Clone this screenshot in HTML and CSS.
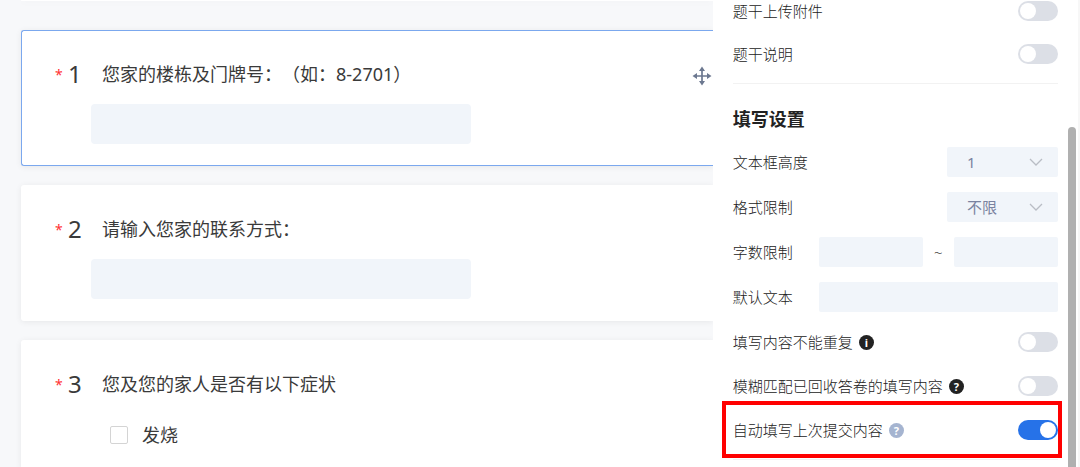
FILE: index.html
```html
<!DOCTYPE html>
<html lang="zh-CN">
<head>
<meta charset="utf-8">
<title>问卷编辑</title>
<link rel="stylesheet" href="styles.css">
</head>
<body>
<div class="editor">
  <main class="questions">
    <div class="card card-previous"></div>

    <section class="card card-active">
      <div class="question-head">
        <span class="required">*</span>
        <span class="number">1</span>
        <label class="title" for="answer-1">您家的楼栋及门牌号：（如：8-2701）</label>
        <button class="move" type="button" aria-label="移动">
          <svg viewBox="0 0 20 20" width="20" height="20" aria-hidden="true">
            <path d="M10 3v14M3 10h14" stroke="currentColor" stroke-width="1.700"/>
            <path d="M10 0.500l3 4.500h-6zM10 19.500l3-4.500h-6zM0.500 10l4.500-3v6zM19.500 10l-4.500-3v6z" fill="currentColor"/>
          </svg>
        </button>
      </div>
      <input class="answer" id="answer-1" type="text">
    </section>

    <section class="card">
      <div class="question-head">
        <span class="required">*</span>
        <span class="number">2</span>
        <label class="title" for="answer-2">请输入您家的联系方式：</label>
      </div>
      <input class="answer" id="answer-2" type="text">
    </section>

    <section class="card">
      <div class="question-head">
        <span class="required">*</span>
        <span class="number">3</span>
        <span class="title">您及您的家人是否有以下症状</span>
      </div>
      <label class="option"><input class="tick" type="checkbox">发烧</label>
    </section>
  </main>

  <aside class="settings">
    <div class="group switches">
      <div class="row"><label for="s-attach">题干上传附件</label><input class="switch" id="s-attach" type="checkbox" role="switch"></div>
      <div class="row"><label for="s-desc">题干说明</label><input class="switch" id="s-desc" type="checkbox" role="switch"></div>
    </div>

    <h2 class="heading">填写设置</h2>

    <div class="group fields">
      <div class="row">
        <label for="f-height">文本框高度</label>
        <div class="picker">
          <select class="field" id="f-height"><option>1</option></select>
          <svg class="chevron" viewBox="0 0 14 8" width="14" height="8" aria-hidden="true"><path d="M1 1l6 6 6-6" fill="none" stroke="currentColor" stroke-width="1.3"/></svg>
        </div>
      </div>
      <div class="row">
        <label for="f-format">格式限制</label>
        <div class="picker">
          <select class="field" id="f-format"><option>不限</option></select>
          <svg class="chevron" viewBox="0 0 14 8" width="14" height="8" aria-hidden="true"><path d="M1 1l6 6 6-6" fill="none" stroke="currentColor" stroke-width="1.3"/></svg>
        </div>
      </div>
      <div class="row">
        <label class="fixed-label" for="f-min">字数限制</label>
        <input class="field grow" id="f-min" type="text">
        <span class="tilde">~</span>
        <input class="field grow" type="text" aria-label="最多字数">
      </div>
      <div class="row">
        <label class="fixed-label" for="f-default">默认文本</label>
        <input class="field grow" id="f-default" type="text">
      </div>
    </div>

    <div class="group switches more">
      <div class="row"><label for="s-unique">填写内容不能重复</label><button class="hint" type="button">i</button><input class="switch" id="s-unique" type="checkbox" role="switch"></div>
      <div class="row"><label for="s-fuzzy">模糊匹配已回收答卷的填写内容</label><button class="hint" type="button">?</button><input class="switch" id="s-fuzzy" type="checkbox" role="switch"></div>
      <div class="row marked"><label for="s-auto">自动填写上次提交内容</label><button class="hint hint-soft" type="button">?</button><input class="switch" id="s-auto" type="checkbox" role="switch" checked></div>
    </div>
    <div class="scrollbar"></div>
  </aside>
</div>
</body>
</html>
```
FILE: styles.css
```css
* {
  box-sizing: border-box;
}

body {
  margin: 0;
  font-family: "Noto Sans", "Noto Sans CJK SC", sans-serif;
  color: #3a3a3a;
  background: #f7f8fa;
  text-spacing-trim: space-all;
}

button,
input,
select {
  margin: 0;
  padding: 0;
  border: 0;
  font: inherit;
}

.editor {
  display: flex;
  height: 100vh;
  overflow: hidden;
}

/* Question list */
.questions {
  flex: 1;
  min-width: 0;
  display: flex;
  flex-direction: column;
  gap: 19px;
  padding-left: 21px;
}

.card {
  flex: none;
  display: flex;
  flex-direction: column;
  gap: 18px;
  padding: 32px 0 22px 34px;
  background: #fff;
  border-radius: 3px 0 0 3px;
  box-shadow: 0 1px 6px rgba(0, 0, 0, 0.07);
}

.card-previous {
  height: 1px;
  padding: 0;
  margin-bottom: 10px;
}

.card-active {
  padding: 31px 0 21px 33px;
  border: solid #7ba8ee;
  border-width: 1px 0 1px 1px;
}

.question-head {
  display: flex;
  align-items: center;
  height: 24px;
}

.required {
  width: 13px;
  font-size: 14px;
  color: #f33;
}

.number {
  width: 34px;
  font-size: 24px;
  line-height: 24px;
}

.title {
  flex: 1;
  font-size: 18px;
  line-height: 24px;
}

.move {
  width: 20px;
  height: 20px;
  margin: 3px 1px 0 0;
  color: #6c7890;
  background: none;
}

.move svg {
  display: block;
}

.answer {
  width: 380px;
  max-width: 90%;
  height: 40px;
  margin-left: 36px;
  padding: 0 12px;
  border-radius: 4px;
  background: #f1f5fa;
}

.option {
  display: flex;
  align-items: center;
  gap: 14px;
  margin: 9px 0 0 55px;
  font-size: 18px;
  line-height: 24px;
}

.tick {
  appearance: none;
  width: 18px;
  height: 18px;
  border: 1px solid #d4d4d4;
  border-radius: 2px;
  background: #fff;
}

/* Settings panel */
.settings {
  position: relative;
  flex: none;
  width: 34%;
  padding: 0 20px 0 20px;
  border-right: 2px solid #f7f7f7;
  background: #fff;
  color: #222;
  font-size: 15px;
  font-weight: 300;
  line-height: 20px;
}

.group {
  display: flex;
  flex-direction: column;
}

.row {
  position: relative;
  display: flex;
  align-items: center;
}

.switches {
  gap: 21px;
  padding-bottom: 18px;
  border-bottom: 1px solid #f2f2f2;
}

.switches .row {
  height: 22px;
}

.heading {
  margin: 23px 0 16px;
  font-size: 18px;
  line-height: 24px;
  font-weight: 700;
}

.fields {
  gap: 15px;
}

.more {
  gap: 22px;
  margin-top: 19px;
}

.switch {
  appearance: none;
  display: flex;
  width: 40px;
  height: 20px;
  margin-left: auto;
  padding: 2px;
  border-radius: 10px;
  background: #dcdfe6;
}

.switch::before {
  content: "";
  width: 16px;
  height: 16px;
  border-radius: 50%;
  background: #fff;
}

.switch:checked {
  justify-content: flex-end;
  background: #2672e8;
}

.field {
  height: 30px;
  border-radius: 2px;
  background: #f1f5fa;
}

.grow {
  flex: 1;
  min-width: 0;
  padding: 0 8px;
}

.fixed-label {
  width: 86px;
}

.tilde {
  width: 31px;
  text-align: center;
}

.picker {
  position: relative;
  width: 111px;
  margin-left: auto;
}

.picker .field {
  display: block;
  appearance: none;
  width: 100%;
  padding-left: 20px;
  font-size: 15px;
  font-weight: 400;
  color: #7a83a0;
}

.chevron {
  position: absolute;
  top: 11px;
  right: 15px;
  color: #b9bdc5;
  pointer-events: none;
}

.hint {
  width: 15px;
  height: 15px;
  margin-left: 6px;
  border-radius: 50%;
  background: #222;
  color: #fff;
  font-size: 11px;
  line-height: 15px;
  font-weight: 700;
  text-align: center;
}

.hint-soft {
  background: #a5b4d0;
}

.marked::after {
  content: "";
  position: absolute;
  inset: -18px -4px -17px -11px;
  border: 4px solid #f00;
  pointer-events: none;
}

.scrollbar {
  position: absolute;
  top: 127px;
  right: 2px;
  bottom: -8px;
  width: 8px;
  border-radius: 4px;
  background: #b0b0b0;
}
```
